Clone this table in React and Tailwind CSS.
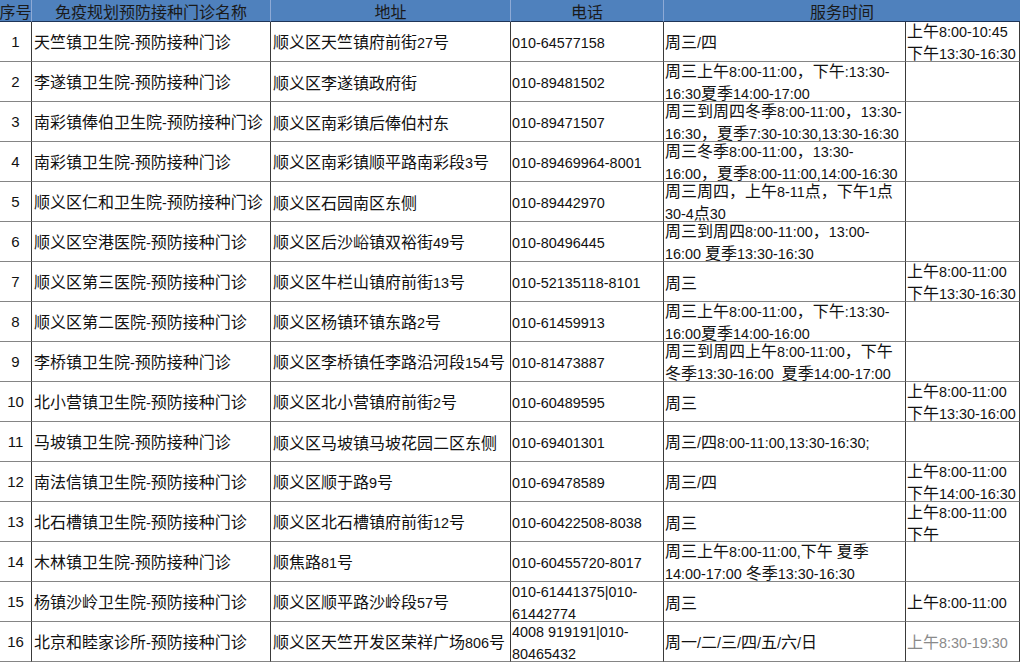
import React from "react";

const rows = [
  ["1", "天竺镇卫生院-预防接种门诊", "顺义区天竺镇府前街27号", ["010-64577158"], ["周三/四"], ["上午8:00-10:45", "下午13:30-16:30"]],
  ["2", "李遂镇卫生院-预防接种门诊", "顺义区李遂镇政府街", ["010-89481502"], ["周三上午8:00-11:00，下午:13:30-", "16:30夏季14:00-17:00"], []],
  ["3", "南彩镇俸伯卫生院-预防接种门诊", "顺义区南彩镇后俸伯村东", ["010-89471507"], ["周三到周四冬季8:00-11:00，13:30-", "16:30，夏季7:30-10:30,13:30-16:30"], []],
  ["4", "南彩镇卫生院-预防接种门诊", "顺义区南彩镇顺平路南彩段3号", ["010-89469964-8001"], ["周三冬季8:00-11:00，13:30-", "16:00，夏季8:00-11:00,14:00-16:30"], []],
  ["5", "顺义区仁和卫生院-预防接种门诊", "顺义区石园南区东侧", ["010-89442970"], ["周三周四，上午8-11点，下午1点", "30-4点30"], []],
  ["6", "顺义区空港医院-预防接种门诊", "顺义区后沙峪镇双裕街49号", ["010-80496445"], ["周三到周四8:00-11:00，13:00-", "16:00 夏季13:30-16:30"], []],
  ["7", "顺义区第三医院-预防接种门诊", "顺义区牛栏山镇府前街13号", ["010-52135118-8101"], ["周三"], ["上午8:00-11:00", "下午13:30-16:30"]],
  ["8", "顺义区第二医院-预防接种门诊", "顺义区杨镇环镇东路2号", ["010-61459913"], ["周三上午8:00-11:00，下午:13:30-", "16:00夏季14:00-16:00"], []],
  ["9", "李桥镇卫生院-预防接种门诊", "顺义区李桥镇任李路沿河段154号", ["010-81473887"], ["周三到周四上午8:00-11:00，下午", "冬季13:30-16:00\u00a0\u00a0夏季14:00-17:00"], []],
  ["10", "北小营镇卫生院-预防接种门诊", "顺义区北小营镇府前街2号", ["010-60489595"], ["周三"], ["上午8:00-11:00", "下午13:30-16:00"]],
  ["11", "马坡镇卫生院-预防接种门诊", "顺义区马坡镇马坡花园二区东侧", ["010-69401301"], ["周三/四8:00-11:00,13:30-16:30;"], []],
  ["12", "南法信镇卫生院-预防接种门诊", "顺义区顺于路9号", ["010-69478589"], ["周三/四"], ["上午8:00-11:00", "下午14:00-16:30"]],
  ["13", "北石槽镇卫生院-预防接种门诊", "顺义区北石槽镇府前街12号", ["010-60422508-8038"], ["周三"], ["上午8:00-11:00", "下午"]],
  ["14", "木林镇卫生院-预防接种门诊", "顺焦路81号", ["010-60455720-8017"], ["周三上午8:00-11:00,下午 夏季", "14:00-17:00 冬季13:30-16:30"], []],
  ["15", "杨镇沙岭卫生院-预防接种门诊", "顺义区顺平路沙岭段57号", ["010-61441375|010-", "61442774"], ["周三"], ["上午8:00-11:00"]],
  ["16", "北京和睦家诊所-预防接种门诊", "顺义区天竺开发区荣祥广场806号", ["4008 919191|010-", "80465432"], ["周一/二/三/四/五/六/日"], ["上午8:30-19:30"]],
];

function Txt({ s }) {
  return s
    .split(/([\x00-\x7F\u00a0]+)/)
    .filter(Boolean)
    .map((p, i) =>
      /^[\x00-\x7F\u00a0]+$/.test(p) ? (
        <span key={i} className="font-['Liberation_Sans',sans-serif] text-[14.4px]">
          {p}
        </span>
      ) : (
        <span key={i}>{p}</span>
      )
    );
}

function Lines({ lines }) {
  return (
    <div className="flex flex-col">
      {lines.map((l, i) => (
        <div key={i} className="whitespace-nowrap leading-[20px]">
          <Txt s={l} />
        </div>
      ))}
    </div>
  );
}

const cell =
  "h-[40px] flex items-center overflow-visible border-r border-b border-r-[#3a3a3a] border-b-[#858585]";

export default function App() {
  return (
    <div className="w-[1021px] h-[663px] bg-white text-[16px] text-[#111] font-['Noto_Sans_CJK_SC',sans-serif] overflow-hidden">
      <div className="grid grid-cols-[32px_239px_240px_153px_242px_114px] w-[1020px]">
        <div className="h-[22px] bg-[#4f81bd] border-r border-b border-r-[#8eaad6] border-b-[#1f3558] flex items-center justify-center whitespace-nowrap leading-[20px] text-[#1a1a1a] overflow-visible">
          序号
        </div>
        <div className="h-[22px] bg-[#4f81bd] border-r border-b border-r-[#8eaad6] border-b-[#1f3558] flex items-center justify-center leading-[20px] text-[#1a1a1a]">
          免疫规划预防接种门诊名称
        </div>
        <div className="h-[22px] bg-[#4f81bd] border-r border-b border-r-[#8eaad6] border-b-[#1f3558] flex items-center justify-center leading-[20px] text-[#1a1a1a]">
          地址
        </div>
        <div className="h-[22px] bg-[#4f81bd] border-r border-b border-r-[#8eaad6] border-b-[#1f3558] flex items-center justify-center leading-[20px] text-[#1a1a1a]">
          电话
        </div>
        <div className="col-span-2 h-[22px] bg-[#4f81bd] border-b border-b-[#1f3558] flex items-center justify-center leading-[20px] text-[#1a1a1a]">
          服务时间
        </div>

        {rows.map((r) => (
          <React.Fragment key={r[0]}>
            <div className={cell + " justify-center"}>
              <span className="font-['Liberation_Sans',sans-serif] text-[15px] leading-[20px]">{r[0]}</span>
            </div>
            <div className={cell + " pl-[2px]"}>
              <Lines lines={[r[1]]} />
            </div>
            <div className={cell + " pl-[2px]"}>
              <Lines lines={[r[2]]} />
            </div>
            <div className={cell + " pl-[1px]"}>
              <Lines lines={r[3]} />
            </div>
            <div className={cell + " pl-[1px]"}>
              <Lines lines={r[4]} />
            </div>
            <div className={cell + " pl-[1px]" + (r[0] === "16" ? " text-[#8a8a8a]" : "")}>
              <Lines lines={r[5]} />
            </div>
          </React.Fragment>
        ))}
      </div>
    </div>
  );
}
